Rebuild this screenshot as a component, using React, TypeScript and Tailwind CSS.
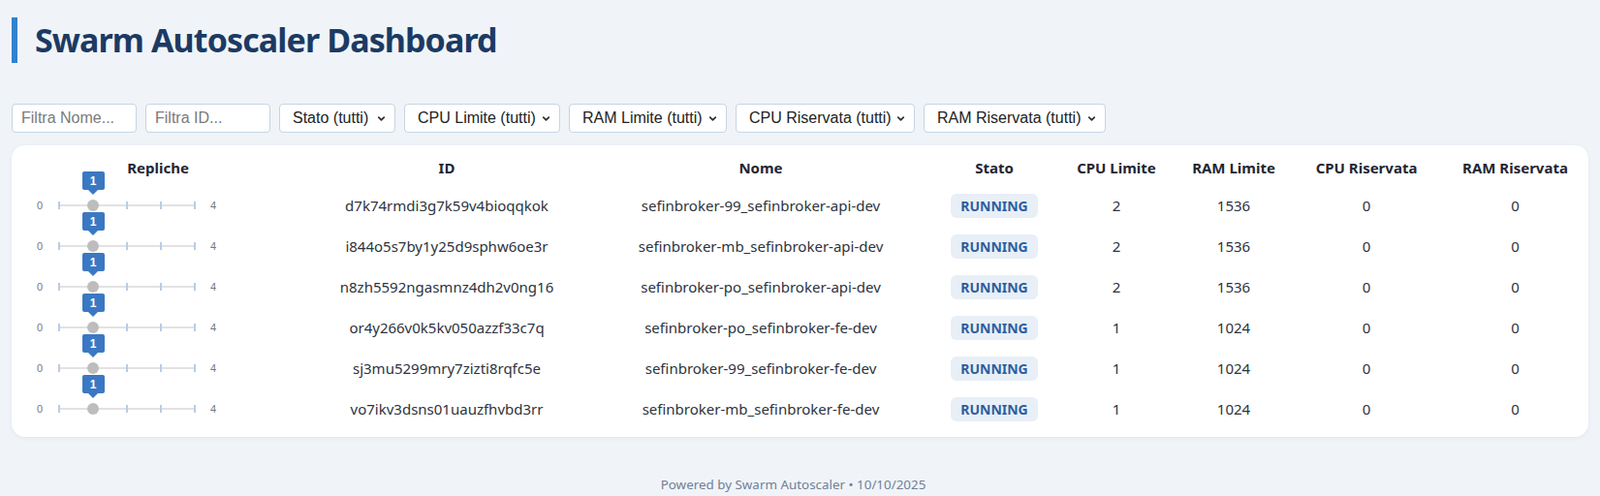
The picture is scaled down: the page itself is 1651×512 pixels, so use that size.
import { ChevronDown } from 'lucide-react'

interface Service {
  id: string
  name: string
  replicas: number
  cpuLimit: number
  ramLimit: number
  cpuReserved: number
  ramReserved: number
}

const services: Service[] = [
  { id: 'd7k74rmdi3g7k59v4bioqqkok', name: 'sefinbroker-99_sefinbroker-api-dev', replicas: 1, cpuLimit: 2, ramLimit: 1536, cpuReserved: 0, ramReserved: 0 },
  { id: 'i844o5s7by1y25d9sphw6oe3r', name: 'sefinbroker-mb_sefinbroker-api-dev', replicas: 1, cpuLimit: 2, ramLimit: 1536, cpuReserved: 0, ramReserved: 0 },
  { id: 'n8zh5592ngasmnz4dh2v0ng16', name: 'sefinbroker-po_sefinbroker-api-dev', replicas: 1, cpuLimit: 2, ramLimit: 1536, cpuReserved: 0, ramReserved: 0 },
  { id: 'or4y266v0k5kv050azzf33c7q', name: 'sefinbroker-po_sefinbroker-fe-dev', replicas: 1, cpuLimit: 1, ramLimit: 1024, cpuReserved: 0, ramReserved: 0 },
  { id: 'sj3mu5299mry7zizti8rqfc5e', name: 'sefinbroker-99_sefinbroker-fe-dev', replicas: 1, cpuLimit: 1, ramLimit: 1024, cpuReserved: 0, ramReserved: 0 },
  { id: 'vo7ikv3dsns01uauzfhvbd3rr', name: 'sefinbroker-mb_sefinbroker-fe-dev', replicas: 1, cpuLimit: 1, ramLimit: 1024, cpuReserved: 0, ramReserved: 0 },
]

const selects = [
  { label: 'Stato (tutti)', width: 'w-[120px]' },
  { label: 'CPU Limite (tutti)', width: 'w-[161px]' },
  { label: 'RAM Limite (tutti)', width: 'w-[163px]' },
  { label: 'CPU Riservata (tutti)', width: 'w-[185px]' },
  { label: 'RAM Riservata (tutti)', width: 'w-[188px]' },
]

const MAX = 4

function ReplicaSlider({ value }: { value: number }) {
  const pos = (value / MAX) * 140
  return (
    <div className="flex items-center pl-[26px] font-['Liberation_Sans',sans-serif] text-[11px] text-[#777]">
      <span className="w-[6px] text-center">0</span>
      <div className="relative ml-[17px] mr-[16px] h-[12px] w-[140px]">
        <div className="absolute left-0 right-0 top-[5px] h-[2px] bg-[#e2e2e2]" />
        {[0, 1, 2, 3, 4].map((t) => (
          <div
            key={t}
            className="absolute top-[2px] h-[8px] w-[2px] bg-[#b7cde6]"
            style={{ left: (t / MAX) * 140 - 1 }}
          />
        ))}
        <div
          className="absolute top-0 h-[12px] w-[12px] rounded-full bg-[#bdbdbd]"
          style={{ left: pos - 6 }}
        />
        <div
          className="absolute bottom-[17px] flex flex-col items-center"
          style={{ left: pos - 11.5 }}
        >
          <div className="flex h-[19px] w-[23px] items-center justify-center rounded-[2px] bg-[#3b78c3] text-[12px] font-bold text-white">
            {value}
          </div>
          <div className="h-0 w-0 border-x-[5px] border-t-[5px] border-x-transparent border-t-[#3b78c3]" />
        </div>
      </div>
      <span className="w-[6px] text-center">{MAX}</span>
    </div>
  )
}

export default function App() {
  return (
    <div className="min-h-[512px] bg-[#f0f4f8] px-3 font-['Noto_Sans',sans-serif]">
      <h1 className="pt-[18px]">
        <span className="block border-l-[6px] border-[#3182ce] pl-[18px] text-[34px] font-bold leading-[47px] tracking-[-0.9px] text-[#1c3a63]">
          Swarm Autoscaler Dashboard
        </span>
      </h1>

      <div className="mt-[42px] flex gap-[9px] font-['Liberation_Sans',sans-serif] text-[16px]">
        <input
          placeholder="Filtra Nome..."
          className="h-[30px] w-[129px] rounded-[4px] border border-[#c6d4e2] bg-white px-[9px] text-[#222] placeholder:text-[#7a7a7a]"
        />
        <input
          placeholder="Filtra ID..."
          className="h-[30px] w-[129px] rounded-[4px] border border-[#c6d4e2] bg-white px-[9px] text-[#222] placeholder:text-[#7a7a7a]"
        />
        {selects.map((s) => (
          <div key={s.label} className={`relative ${s.width}`}>
            <select className="h-[30px] w-full appearance-none rounded-[4px] border border-[#c6d4e2] bg-white pl-[13px] text-[#222]">
              <option>{s.label}</option>
            </select>
            <ChevronDown
              size={11}
              strokeWidth={4}
              className="pointer-events-none absolute right-[9px] top-[10px] text-[#333]"
            />
          </div>
        ))}
      </div>

      <div className="mt-[13px] rounded-[14px] bg-white py-2 shadow-[0_1px_4px_rgba(30,58,99,0.08)]">
        <table className="w-full table-fixed border-collapse text-center text-[15px] text-[#2d3340]">
          <colgroup>
            <col className="w-[302px]" />
            <col className="w-[294px]" />
            <col className="w-[354px]" />
            <col className="w-[128px]" />
            <col className="w-[124px]" />
            <col className="w-[118px]" />
            <col className="w-[156px]" />
            <col />
          </colgroup>
          <thead>
            <tr className="h-[31px] text-[15px] font-bold text-[#1f2633]">
              <th>Repliche</th>
              <th>ID</th>
              <th>Nome</th>
              <th>Stato</th>
              <th>CPU Limite</th>
              <th>RAM Limite</th>
              <th>CPU Riservata</th>
              <th>RAM Riservata</th>
            </tr>
          </thead>
          <tbody>
            <tr className="h-[2px]" />
            {services.map((s) => (
              <tr key={s.id} className="h-[42px]">
                <td className="text-left">
                  <ReplicaSlider value={s.replicas} />
                </td>
                <td>{s.id}</td>
                <td>{s.name}</td>
                <td>
                  <span className="inline-block rounded-[6px] bg-[#e8eff7] px-[10px] py-[2px] text-[14px] font-bold text-[#2c5d9f]">
                    RUNNING
                  </span>
                </td>
                <td>{s.cpuLimit}</td>
                <td>{s.ramLimit}</td>
                <td>{s.cpuReserved}</td>
                <td>{s.ramReserved}</td>
              </tr>
            ))}
          </tbody>
        </table>
      </div>

      <footer className="mt-[39px] pr-[14px] text-center text-[13.4px] text-[#718096]">
        Powered by Swarm Autoscaler • 10/10/2025
      </footer>
    </div>
  )
}
